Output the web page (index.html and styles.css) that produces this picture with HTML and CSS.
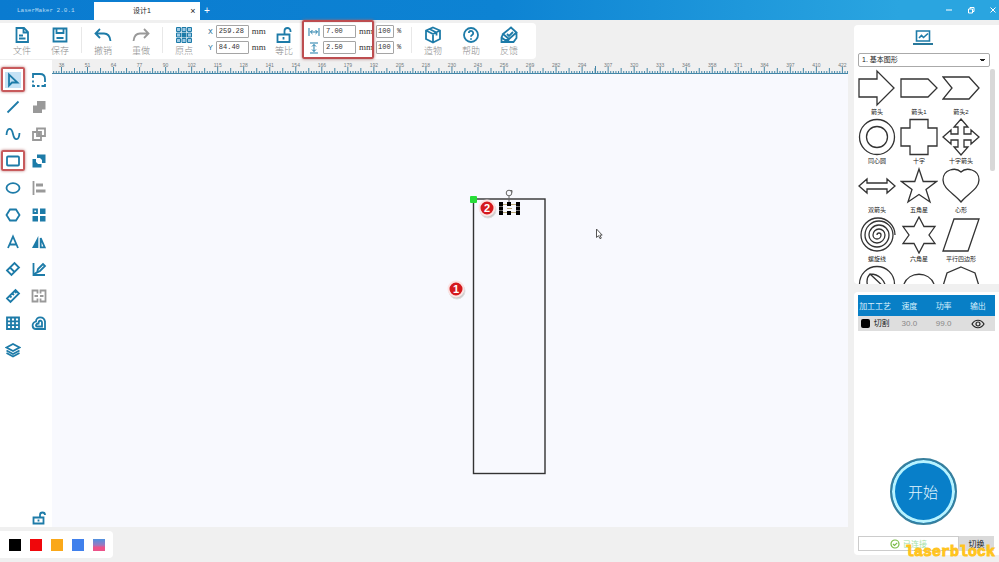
FILE: index.html
```html
<!DOCTYPE html>
<html lang="zh-CN">
<head>
<meta charset="utf-8">
<title>LaserMaker 2.0.1</title>
<link rel="stylesheet" href="styles.css">
</head>
<body>
<div class="app">
  <header class="titlebar">
    <span class="app-name">LaserMaker 2.0.1</span>
    <div class="tab"><span class="tab-name">设计1</span><button class="plain tab-close" aria-label="关闭标签">×</button></div>
    <button class="plain tab-add" aria-label="新建标签">+</button>
    <div class="window-buttons">
      <button class="plain" aria-label="最小化"><svg viewBox="0 0 8 8"><path d="M1 4h6"/></svg></button>
      <button class="plain" aria-label="还原"><svg viewBox="0 0 8 8"><path d="M1.500 3h4v4h-4zM3 3V1.500h4v4H5.500"/></svg></button>
      <button class="plain" aria-label="关闭"><svg viewBox="0 0 8 8"><path d="M1.500 1.500l5 5M6.500 1.500l-5 5"/></svg></button>
    </div>
  </header>

  <div class="main">
    <div class="workspace">
      <div class="toolbar">
        <button class="action"><svg viewBox="0 0 18 18"><path d="M3.500 2h7.500l4 4v10h-11.500zM10.500 2v4.500h4M6 9.500h4M6 12.500h6.500"/></svg><span>文件</span></button>
        <button class="action"><svg viewBox="0 0 18 18"><path d="M2.500 2.500h13v13h-13zM5.500 2.500v4.500h7v-4.500M5.500 12h7"/></svg><span>保存</span></button>
        <i class="divider"></i>
        <button class="action"><svg viewBox="0 0 18 18"><path d="M6 3L1.500 7.500L6 12M2 7.500h8c4 0 6 3 6.500 7.500"/></svg><span>撤销</span></button>
        <button class="action muted"><svg viewBox="0 0 18 18"><path d="M12 3l4.500 4.500L12 12M16 7.500H8c-4 0-6 3-6.500 7.500"/></svg><span>重做</span></button>
        <i class="divider"></i>
        <button class="action"><svg viewBox="0 0 18 18"><g class="dots"><path d="M1.500 1.500h4v4h-4zM7 1.500h4v4h-4zM12.500 1.500h4v4h-4zM1.500 7h4v4h-4zM12.500 7h4v4h-4zM1.500 12.500h4v4h-4zM7 12.500h4v4h-4zM12.500 12.500h4v4h-4z"/><path class="solid" d="M6.500 6.500h5v5h-5z"/></g></svg><span>原点</span></button>
        <div class="fields position">
          <label class="field"><b>X</b><input value="259.28"><span class="unit">mm</span></label>
          <label class="field"><b>Y</b><input value="84.40"><span class="unit">mm</span></label>
        </div>
        <button class="action"><svg viewBox="0 0 18 18"><path d="M2.500 8.500h12v7.500h-12zM9.500 8.500V5a3 3 0 0 1 6 0v1M8.500 11v2.500"/></svg><span>等比</span></button>
        <div class="fields size">
          <label class="field"><svg viewBox="0 0 12 12"><path d="M1 2v8M11 2v8M2.500 6h7M4.500 4L2.500 6l2 2M7.500 4l2 2-2 2"/></svg><input aria-label="宽度" value="7.00"><span class="unit">mm</span></label>
          <label class="field"><svg viewBox="0 0 12 12"><path d="M2 1h8M2 11h8M6 2.500v7M4 4.500l2-2 2 2M4 7.500l2 2 2-2"/></svg><input aria-label="高度" value="2.50"><span class="unit">mm</span></label>
        </div>
        <div class="fields percent">
          <label class="field"><input aria-label="宽度比例" value="100"><span>%</span></label>
          <label class="field"><input aria-label="高度比例" value="100"><span>%</span></label>
        </div>
        <i class="divider"></i>
        <button class="action"><svg viewBox="0 0 18 18"><path d="M9 1.500l7 3v8.500l-7 3.500-7-3.500v-8.500zM2 4.500l7 3.500 7-3.500M9 8v8.500M5.500 3l7 3.500v3"/></svg><span>造物</span></button>
        <button class="action"><svg viewBox="0 0 18 18"><circle cx="9" cy="9" r="7"/><path d="M6.800 7a2.200 2.200 0 1 1 3.300 2C9.200 9.500 9 10 9 10.800M9 12.200v1.500"/></svg><span>帮助</span></button>
        <button class="action"><svg viewBox="0 0 18 18"><path d="M3 8L11 1.500L16.500 6.500L9 13zM7 8l2 2L13 6M3 8L1.500 11.500v4.500h12l3-4v-5M1.500 11.500L5 14h3.500l.5-1"/></svg><span>反馈</span></button>
      </div>

      <div class="editor">
        <nav class="tools" aria-label="绘图工具">
          <button class="tool selected marked" aria-label="选择"><svg viewBox="0 0 16 16"><path d="M4 2.500v11l3-3h5.500z"/></svg></button>
          <button class="tool" aria-label="倒角"><svg viewBox="0 0 16 16"><path d="M2 6V2h7c3 0 5 2 5 5v3M2 8.500v2M2 12.500v1.500h2M6 14h2.500M10.500 14H14v-2"/></svg></button>
          <button class="tool" aria-label="直线"><svg viewBox="0 0 16 16"><path d="M2.500 13.500l11-11"/></svg></button>
          <button class="tool muted" aria-label="合并"><svg viewBox="0 0 16 16"><path class="solid" d="M6 2h8.500v8.500H11v3.500H2V6.500h4z"/></svg></button>
          <button class="tool" aria-label="曲线"><svg viewBox="0 0 16 16"><path d="M1.500 9C2 1 6.500 1 8 8s6 7 6.500-1"/></svg></button>
          <button class="tool muted" aria-label="相交"><svg viewBox="0 0 16 16"><path d="M6 2.500h8V10H6zM2 6h8v8H2z"/><path class="solid" d="M7 7h2v2H7z"/></svg></button>
          <button class="tool marked" aria-label="矩形"><svg viewBox="0 0 16 16"><rect x="2" y="3.500" width="12" height="9" rx="1"/></svg></button>
          <button class="tool" aria-label="相减"><svg viewBox="0 0 16 16"><path class="solid" d="M6 1.500h8.500V10H11V7L9 5H6zM1.500 6H5v3l2 2h3.500v3.500h-9z"/></svg></button>
          <button class="tool" aria-label="椭圆"><svg viewBox="0 0 16 16"><ellipse cx="8" cy="8" rx="6.500" ry="4.800"/></svg></button>
          <button class="tool muted" aria-label="对齐"><svg viewBox="0 0 16 16"><path d="M2.500 1v14"/><path class="solid" d="M5 3.500h7v3H5zM5 9.500h9.500v3H5z"/></svg></button>
          <button class="tool" aria-label="多边形"><svg viewBox="0 0 16 16"><path d="M5 2.500h6l3.500 5.500-3.500 5.500H5L1.500 8z"/></svg></button>
          <button class="tool" aria-label="阵列"><svg viewBox="0 0 16 16"><path d="M2.500 2.500h3.500v3.500h-3.500z"/><path class="solid" d="M9 1.500h5.500v5.500H9zM1.500 9H7v5.500H1.500zM9 9h5.500v5.500H9z"/></svg></button>
          <button class="tool" aria-label="文字"><svg viewBox="0 0 16 16"><path d="M3 14L8 2.500 13 14M4.500 10.500h7"/></svg></button>
          <button class="tool" aria-label="镜像"><svg viewBox="0 0 16 16"><path class="solid" d="M7.300 2v12H1z"/><path d="M9.700 4v9.300h4z"/></svg></button>
          <button class="tool" aria-label="橡皮"><svg viewBox="0 0 16 16"><path d="M2 9.500L9.500 2l4.500 4.500L6.500 14zM5 6.500l4.500 4.500"/></svg></button>
          <button class="tool" aria-label="编辑节点"><svg viewBox="0 0 16 16"><path d="M2.500 2v12H14M6 11.500l1-3.500 5-5 2 2-5 5zM2.500 14l3-2.500"/></svg></button>
          <button class="tool" aria-label="测量"><svg viewBox="0 0 16 16"><path d="M2 10.500L10.500 2l3.500 3.500L5.500 14zM5 8l1.500 1.500M7.500 5.500L9 7M10 3.500L11.500 5"/></svg></button>
          <button class="tool muted" aria-label="拼接"><svg viewBox="0 0 16 16"><path d="M6.500 5.500V2.500h-5v11h5v-3M9.500 5.500V2.500h5v11h-5v-3M3.500 8h3.500M9 8h3.500"/></svg></button>
          <button class="tool" aria-label="网格"><svg viewBox="0 0 16 16"><path d="M2 2.500h12v11.500H2zM2 6.300h12M2 10.200h12M6 2.500v11.500M10 2.500v11.500"/></svg></button>
          <button class="tool" aria-label="轮廓"><svg viewBox="0 0 16 16"><path d="M14 14H5c-4 0-5-6 0-7.500C5 1 13 1 14 6.500zM11 11.500H6c-1.500 0-1.500-3 1.500-3C7.500 5 11 5 11 7.500z"/></svg></button>
          <button class="tool" aria-label="图层"><svg viewBox="0 0 16 16"><path d="M1.500 5.500L8 2l6.500 3.500L8 9zM1.500 8.500L8 12l6.500-3.500M1.500 11L8 14.500l6.500-3.500"/></svg></button>
          <button class="tool lock" aria-label="锁定"><svg viewBox="0 0 16 16"><path d="M2.500 7.500h10v6h-10zM9 7.500V5a2.500 2.500 0 0 1 5 0M7.500 9.500v2"/></svg></button>
        </nav>
        <div class="stage">
          <svg class="ruler" id="ruler" viewBox="52 59 796 14" preserveAspectRatio="xMinYMin slice"></svg>
          <svg class="canvas" viewBox="52 74 796 453" preserveAspectRatio="xMinYMin slice">
            <rect class="drawn" x="473.500" y="199" width="71.500" height="274.500"/>
            <rect class="origin" x="470" y="196" width="7" height="7" rx="1"/>
            <path class="stem" d="M509 196v9"/>
            <circle class="rotate" cx="509" cy="193" r="2.800"/><path class="rotate" d="M510 190.500h2v2"/>
            <path class="tiny" d="M501 204.500h18v8h-18z"/>
            <path class="handles" d="M499 202h4v4h-4zM499 206.500h4v4h-4zM499 211h4v4h-4zM507 202h4v4h-4zM507 211h4v4h-4zM516 202h4v4h-4zM516 206.500h4v4h-4zM516 211h4v4h-4z"/>
            <path class="tiny" d="M507 208.500h5"/>
            <g class="badge"><circle class="shade" cx="457" cy="291" r="8"/><circle cx="456" cy="289" r="7.500"/><text x="456" y="293">1</text></g>
            <g class="badge"><circle class="shade" cx="488" cy="210" r="8"/><circle cx="487" cy="208" r="7.500"/><text x="487" y="212">2</text></g>
            <path class="pointer" d="M596.500 229v8.500l2-1.800 1.500 3 1.300-.6-1.400-3h2.300z"/>
          </svg>
        </div>
      </div>

      <footer class="swatches">
        <button class="swatch black" aria-label="黑色"></button>
        <button class="swatch red" aria-label="红色"></button>
        <button class="swatch orange" aria-label="橙色"></button>
        <button class="swatch blue" aria-label="蓝色"></button>
        <button class="swatch mixed" aria-label="更多颜色"></button>
      </footer>
    </div>

    <aside class="side">
      <section class="card library">
        <button class="plain library-tab" aria-label="图库"><svg viewBox="0 0 18 12"><path d="M2.500 1h13v10h-13zM5 8l2.500-2.500 2 2L14 3.500"/></svg></button>
        <select class="category" aria-label="图形分类"><option>1. 基本图形</option></select>
        <div class="library-body">
          <div class="shapes">
            <figure><svg viewBox="0 0 38 38"><path d="M1 10h18V2l17 17-17 17v-8H1z"/></svg><figcaption>箭头</figcaption></figure>
            <figure><svg viewBox="0 0 38 38"><path d="M1 10h27l9 9-9 9H1z"/></svg><figcaption>箭头1</figcaption></figure>
            <figure><svg viewBox="0 0 38 38"><path d="M1 8h26l10 11-10 11H1l9-11z"/></svg><figcaption>箭头2</figcaption></figure>
            <figure><svg viewBox="0 0 38 38"><circle cx="19" cy="19" r="17.500"/><circle cx="19" cy="19" r="10.500"/></svg><figcaption>同心圆</figcaption></figure>
            <figure><svg viewBox="0 0 38 38"><path d="M10 1.500h18V10h9v18h-9v8.500H10V28H1V10h9z"/></svg><figcaption>十字</figcaption></figure>
            <figure><svg viewBox="0 0 38 38"><path d="M19 1l7 8h-4v7h7v-4l8 7-8 7v-4h-7v7h4l-7 8-7-8h4v-7H9v4l-8-7 8-7v4h7V9h-4z"/></svg><figcaption>十字箭头</figcaption></figure>
            <figure><svg viewBox="0 0 38 38"><path d="M1 19l8-7v4h20v-4l8 7-8 7v-4H9v4z"/></svg><figcaption>双箭头</figcaption></figure>
            <figure><svg viewBox="0 0 38 38"><path d="M19 2l4.200 12.500h13.300L26 22.500l4 12.500-11-7.500L8 35l4-12.500-10.500-8h13.300z"/></svg><figcaption>五角星</figcaption></figure>
            <figure><svg viewBox="0 0 38 38"><path d="M19 5C24 0 37 2 37 13c0 9-12 14-18 22C13 27 1 22 1 13 1 2 14 0 19 5z"/></svg><figcaption>心形</figcaption></figure>
            <figure><svg viewBox="0 0 38 38"><path d="M19 19a2 2 0 0 1 4 0a4 4 0 0 1-8 0a6 6 0 0 1 12 0a8 8 0 0 1-16 0a10 10 0 0 1 20 0a12 12 0 0 1-24 0a14 14 0 0 1 28 0a16 16 0 0 1-32 0a17 17 0 0 1 34 0"/></svg><figcaption>螺旋线</figcaption></figure>
            <figure><svg viewBox="0 0 38 38"><path d="M19 1l5 9.500h11L29 19l6 8.500H24L19 37l-5-9.500H3L9 19l-6-8.500h11z"/></svg><figcaption>六角星</figcaption></figure>
            <figure><svg viewBox="0 0 38 38"><path d="M12 3h25L26 35H1z"/></svg><figcaption>平行四边形</figcaption></figure>
            <figure><svg viewBox="0 0 38 38"><circle cx="19" cy="19" r="17.500"/><path d="M28 24L12 9C8 13 8 20 12 24M12 9c9 0 15 6 16 15"/></svg></figure>
            <figure><svg viewBox="0 0 38 38"><path d="M4 19c5-13 25-13 30 0"/></svg></figure>
            <figure><svg viewBox="0 0 38 38"><path d="M19 2l14 6 4 13-8 13H9L1 21 5 8z"/></svg></figure>
          </div>
          <div class="scrollbar"></div>
        </div>
      </section>

      <section class="card process">
        <table>
          <thead><tr><th>加工工艺</th><th>速度</th><th>功率</th><th>输出</th></tr></thead>
          <tbody><tr><td class="craft"><i></i>切割</td><td>30.0</td><td>99.0</td><td><svg viewBox="0 0 14 10"><path d="M1 5c3-5 9-5 12 0-3 5-9 5-12 0z"/><circle cx="7" cy="5" r="2"/></svg></td></tr></tbody>
        </table>
        <button class="start">开始</button>
        <div class="connection">
          <div class="status"><svg viewBox="0 0 10 10"><circle cx="5" cy="5" r="4"/><path d="M3 5l1.500 1.500L7.200 3.800"/></svg>已连接</div>
          <button class="switch">切换</button>
        </div>
        <div class="watermark">laserblock</div>
      </section>
    </aside>
  </div>
</div>
<script src="ruler.js"></script>
</body>
</html>
```
FILE: styles.css
```css
* { box-sizing: border-box; }
body {
  margin: 0;
  background: #f0f0f0;
  color: #222;
  font-family: "Liberation Sans", "Noto Sans CJK SC", sans-serif;
}
button, input, select { margin: 0; padding: 0; border: 0; font: inherit; color: inherit; background: none; }
svg { display: block; fill: none; stroke: currentColor; }
.solid { fill: currentColor; stroke: none; }
.app { display: flex; flex-direction: column; height: 100vh; }

.titlebar {
  display: flex;
  flex: none;
  height: 20px;
  color: #fff;
  background: linear-gradient(90deg, #0a7bd0, #0d83d3 50%, #2aa5e0 90%);
}
.app-name { width: 94px; padding-left: 17px; font: 6px/22px "Liberation Mono", monospace; color: #b9dcf4; white-space: nowrap; }
.tab { display: flex; width: 106px; margin-top: 2px; background: #fff; color: #222; font-size: 7px; line-height: 18px; }
.tab-name { flex: 1; padding-left: 4px; text-align: center; }
.tab-close { width: 14px; font-size: 9px; }
.tab-add { width: 14px; font-size: 10px; }
.window-buttons { display: flex; gap: 14px; margin-left: auto; padding-right: 2px; align-items: center; }
.window-buttons svg { width: 8px; height: 8px; }

.main { display: flex; flex: 1; min-height: 0; }
.workspace { display: flex; flex: 1; flex-direction: column; min-width: 0; }

.toolbar {
  display: flex;
  flex: none;
  align-self: flex-start;
  height: 36px;
  margin-top: 3px;
  padding: 0 8px 0 3px;
  background: #fff;
  border-radius: 0 4px 4px 0;
}
.action { display: flex; flex-direction: column; align-items: center; width: 38px; padding-top: 3px; color: #1d7ba8; }
.action svg { width: 18px; height: 18px; stroke-width: 1.8; }
.action span { margin-top: 1px; color: #8c8c8c; font-size: 9px; font-weight: 300; line-height: 12px; }
.action.muted, .tool.muted { color: #999; }
.dots { stroke-width: 1; fill: #9dc9e4; }
.divider { width: 1px; height: 26px; margin: 4px 2px; background: #e8e8e8; }

.fields { display: flex; flex-direction: column; gap: 3px; padding-top: 2px; }
.field { display: flex; align-items: center; gap: 3px; height: 13px; font: 7px/13px "Liberation Mono", monospace; color: #333; }
.field b { width: 6px; color: #2a6f96; font-weight: 400; font-size: 8px; }
.field input { width: 33px; height: 13px; padding-left: 2px; border: 1px solid #a5a5a5; border-radius: 1px; background: #fff; }
.field .unit { font: 9px/13px "Liberation Serif", serif; }
.field svg { width: 12px; height: 12px; color: #1d7ba8; }
.position { width: 62px; padding-left: 5px; }
.size { position: relative; width: 70px; padding-left: 5px; }
.size::after { content: ""; position: absolute; inset: -3px -1px 0 -1px; border: 2px solid #bd4d50; border-radius: 2px; box-shadow: 0 0 3px #a66; pointer-events: none; }
.percent { width: 36px; padding-left: 3px; }
.percent input { width: 18px; padding-left: 1px; }

.editor { display: flex; flex: 1; min-height: 0; margin-top: 1px; }
.tools {
  display: grid;
  flex: none;
  grid-template-columns: 26px 26px;
  grid-template-rows: repeat(11, 27px) 1fr;
  width: 52px;
  padding-top: 6px;
  background: #fff;
}
.tool { display: grid; place-items: center; color: #1d7ba8; }
.tool svg { width: 16px; height: 16px; stroke-width: 1.8; }
.tool.selected svg { background: #c5e2f5; }
.tool.marked { height: 25px; margin: 1px; outline: 2px solid #c75a5c; outline-offset: -2px; border-radius: 2px; box-shadow: 0 0 3px #b77; }
.tool.marked:not(.selected) { height: 21px; margin: 3px 1px; }
.tool.lock { grid-column: 2; grid-row: 12; align-self: end; }
.tool.lock svg { margin-bottom: 1px; }

.stage { display: flex; flex: 1; flex-direction: column; min-width: 0; }
.ruler { flex: none; width: 100%; height: 14px; background: #f0f0f0; }
.ruler path { stroke: #4487a8; stroke-width: 1; }
.ruler text { fill: #737b80; stroke: none; font: 5px "Liberation Sans", sans-serif; text-anchor: middle; }
.canvas { flex: 1; width: 100%; min-height: 0; background: #f8f9fe; }
.drawn { stroke: #333; stroke-width: 1.4; }
.origin { fill: #27dc38; stroke: none; }
.stem, .rotate { stroke: #666; }
.tiny { stroke: #b9a878; }
.handles { fill: #000; stroke: none; }
.badge circle { fill: #d5191d; stroke: #fbe3e3; stroke-width: 2; }
.badge .shade { fill: #ccc; stroke: #dedede; stroke-width: 1; }
.badge text { fill: #fff; stroke: none; font: bold 11px "Liberation Sans", sans-serif; text-anchor: middle; }
.pointer { fill: #fff; stroke: #555; stroke-width: 1; }

.swatches { display: flex; flex: none; align-items: center; align-self: flex-start; gap: 9px; height: 27px; margin: 4px 0; padding: 0 8px 0 9px; border-radius: 0 4px 4px 0; background: #fff; }
.swatch { width: 12px; height: 12px; }
.black { background: #000; }
.red { background: #f0070b; }
.orange { background: #faa819; }
.blue { background: #4080ec; }
.mixed { background: linear-gradient(#4f91e0, #9a79c0 50%, #ec5289 70%); }

.side { display: flex; flex: none; flex-direction: column; width: 145px; margin-left: 6px; padding: 5px 0 7px; gap: 8px; }
.card { background: #fff; border-radius: 4px 0 0 4px; }
.library { display: flex; flex: none; flex-direction: column; height: 259px; padding: 5px 4px 0; }
.library-tab { align-self: center; margin-right: 7px; padding: 0 1px 1px; border-bottom: 2px solid #28789b; color: #1d7ba8; }
.library-tab svg { width: 18px; height: 12px; stroke-width: 1.6; }
.category {
  flex: none;
  width: 132px;
  height: 14px;
  margin-top: 8px;
  padding-left: 3px;
  border: 1px solid #aaa;
  border-radius: 2px;
  appearance: none;
  font-size: 7px;
  line-height: 12px;
  background:
    linear-gradient(#222, #222) no-repeat right 4px top 5px / 5px 1px,
    linear-gradient(#222, #222) no-repeat right 5px top 6px / 3px 1px,
    #fff;
}
.library-body { display: flex; flex: 1; min-height: 0; justify-content: space-between; margin-top: 2px; overflow: hidden; }
.shapes { display: grid; grid-template-columns: repeat(3, 42px); grid-auto-rows: 49px; margin-left: -2px; }
figure { display: flex; flex-direction: column; align-items: center; margin: 0; }
figure svg { width: 38px; height: 38px; color: #333; stroke-width: 1.3; }
figcaption { font-size: 6px; line-height: 11px; white-space: nowrap; }
.scrollbar { width: 5px; height: 102px; border-radius: 2px; background: #d8d8d8; }

.process { position: relative; display: flex; flex: 1; flex-direction: column; align-items: center; padding: 3px 4px 4px; }
table { width: 137px; align-self: flex-start; border-collapse: collapse; table-layout: fixed; font-size: 8px; }
th, td { padding: 0; text-align: center; font-weight: 400; white-space: nowrap; }
th { height: 21px; background: #087fc6; color: #d6effc; }
td { height: 15px; line-height: 12px; background: #dedede; color: #888; }
td svg { width: 14px; height: 10px; margin: auto; color: #222; stroke-width: 1.2; }
td.craft { color: #222; }
.craft i { display: inline-block; width: 9px; height: 9px; margin-right: 4px; border-radius: 2px; background: #000; vertical-align: middle; }
.start {
  width: 67px;
  height: 67px;
  margin: auto 7px 11px 0;
  border: 2px solid #377f9d;
  border-radius: 50%;
  background: #087fc9;
  box-shadow: inset 0 0 0 3px #b8f3ff;
  color: #e4f7ff;
  font-size: 15px;
  font-weight: 300;
}
.connection { display: flex; align-self: flex-start; width: 136px; height: 15px; font-size: 8px; }
.status { display: flex; flex: 1; gap: 3px; align-items: center; justify-content: center; border: 1px solid #ccc; color: #a5dfa5; }
.status svg { width: 10px; height: 10px; color: #79bb45; stroke-width: 1.2; }
.switch { width: 35px; background: #dadada; }
.watermark { position: absolute; right: 4px; bottom: -6px; color: #ffc41f; font: bold 15px/16px "Liberation Mono", monospace; -webkit-text-stroke: 1px #ffc41f; }
```
FILE: ruler.js
```js
const ruler = document.getElementById("ruler");
const step = 26.03;
let ticks = "M52 72.500H848";
let labels = "";
for (let i = -1; i < 31; i++) {
  const x = 61.500 + i * step;
  for (let k = 0; k < 10; k++) {
    const tx = x + k * step / 10;
    const h = k === 0 ? 6 : k === 5 ? 5 : 2;
    if (tx >= 52 && tx < 848) ticks += `M${tx} 72v-${h}`;
  }
  if (i >= 0) labels += `<text x="${x}" y="66">${Math.round(38.4 + 12.8 * i)}</text>`;
}
ruler.innerHTML = `<path d="${ticks}"/>${labels}<path d="M595.500 72v-7"/>`;
```
